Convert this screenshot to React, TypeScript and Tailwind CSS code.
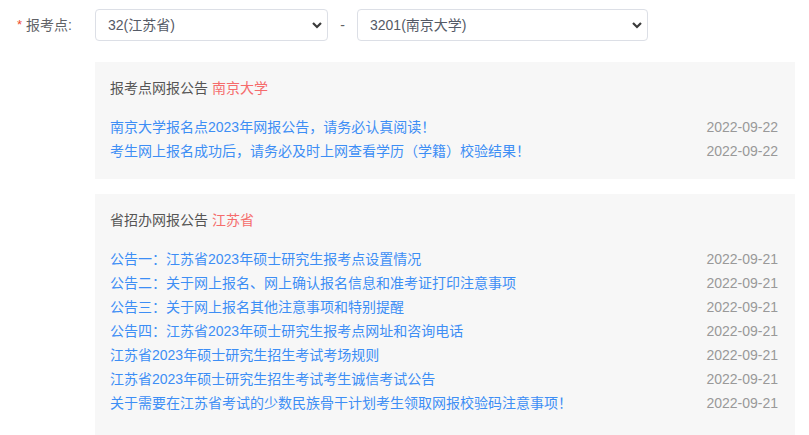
import React from "react";

const font = {
  fontFamily: '"Liberation Sans", Arial, "Noto Sans CJK SC", sans-serif',
};

type Item = { title: string; date: string };

const schoolNotices: Item[] = [
  { title: "南京大学报名点2023年网报公告，请务必认真阅读！", date: "2022-09-22" },
  { title: "考生网上报名成功后，请务必及时上网查看学历（学籍）校验结果！", date: "2022-09-22" },
];

const provinceNotices: Item[] = [
  { title: "公告一：江苏省2023年硕士研究生报考点设置情况", date: "2022-09-21" },
  { title: "公告二：关于网上报名、网上确认报名信息和准考证打印注意事项", date: "2022-09-21" },
  { title: "公告三：关于网上报名其他注意事项和特别提醒", date: "2022-09-21" },
  { title: "公告四：江苏省2023年硕士研究生报考点网址和咨询电话", date: "2022-09-21" },
  { title: "江苏省2023年硕士研究生招生考试考场规则", date: "2022-09-21" },
  { title: "江苏省2023年硕士研究生招生考试考生诚信考试公告", date: "2022-09-21" },
  { title: "关于需要在江苏省考试的少数民族骨干计划考生领取网报校验码注意事项！", date: "2022-09-21" },
];

function Select({ value, width }: { value: string; width: string }) {
  return (
    <div className={`relative h-[32px] ${width}`}>
      <select
        defaultValue={value}
        className="appearance-none w-full h-full rounded-[4px] border border-[#dcdfe6] bg-white pl-[12px] pr-[30px] text-[14px] text-[#555a66] outline-none"
        style={font}
      >
        <option>{value}</option>
      </select>
      <svg
        className="absolute right-[5px] top-[11px] pointer-events-none"
        width="12"
        height="10"
        viewBox="0 0 12 10"
      >
        <path d="M2 3 L6 7 L10 3" fill="none" stroke="#3a3a3a" strokeWidth="2.2" />
      </svg>
    </div>
  );
}

function Panel({ title, place, items, last }: { title: string; place: string; items: Item[]; last?: boolean }) {
  return (
    <div className={`bg-[#f7f7f7] pl-[15px] pr-[17px] pt-[14px] ${last ? "pb-[30px]" : "pb-[16px]"}`}>
      <div className="text-[14px] leading-[24px] text-[#555]">
        {title} <span className="text-[#f56c6c]">{place}</span>
      </div>
      <ul className="mt-[15px]">
        {items.map((it) => (
          <li key={it.title} className="flex justify-between text-[14px] leading-[24px]">
            <a href="#" className="text-[#3d8ef5]">
              {it.title}
            </a>
            <span className="text-[#999]">{it.date}</span>
          </li>
        ))}
      </ul>
    </div>
  );
}

export default function App() {
  return (
    <div className="w-[809px] h-[435px] overflow-hidden bg-white" style={font}>
      {/* 报考点 selects */}
      <div className="flex items-center pt-[9px]">
        <div className="w-[95px] pl-[17px] flex items-center text-[14px] text-[#606266]">
          <span className="text-[#ef4b2b] mr-[4px] text-[13px]">*</span>
          报考点:
        </div>
        <Select value="32(江苏省)" width="w-[233px]" />
        <div className="w-[29px] text-center text-[14px] text-[#606266]">-</div>
        <Select value="3201(南京大学)" width="w-[291px]" />
      </div>

      {/* Notices */}
      <div className="ml-[95px] w-[700px] mt-[21px] flex flex-col gap-[15px]">
        <Panel title="报考点网报公告" place="南京大学" items={schoolNotices} />
        <Panel title="省招办网报公告" place="江苏省" items={provinceNotices} last />
      </div>
    </div>
  );
}
